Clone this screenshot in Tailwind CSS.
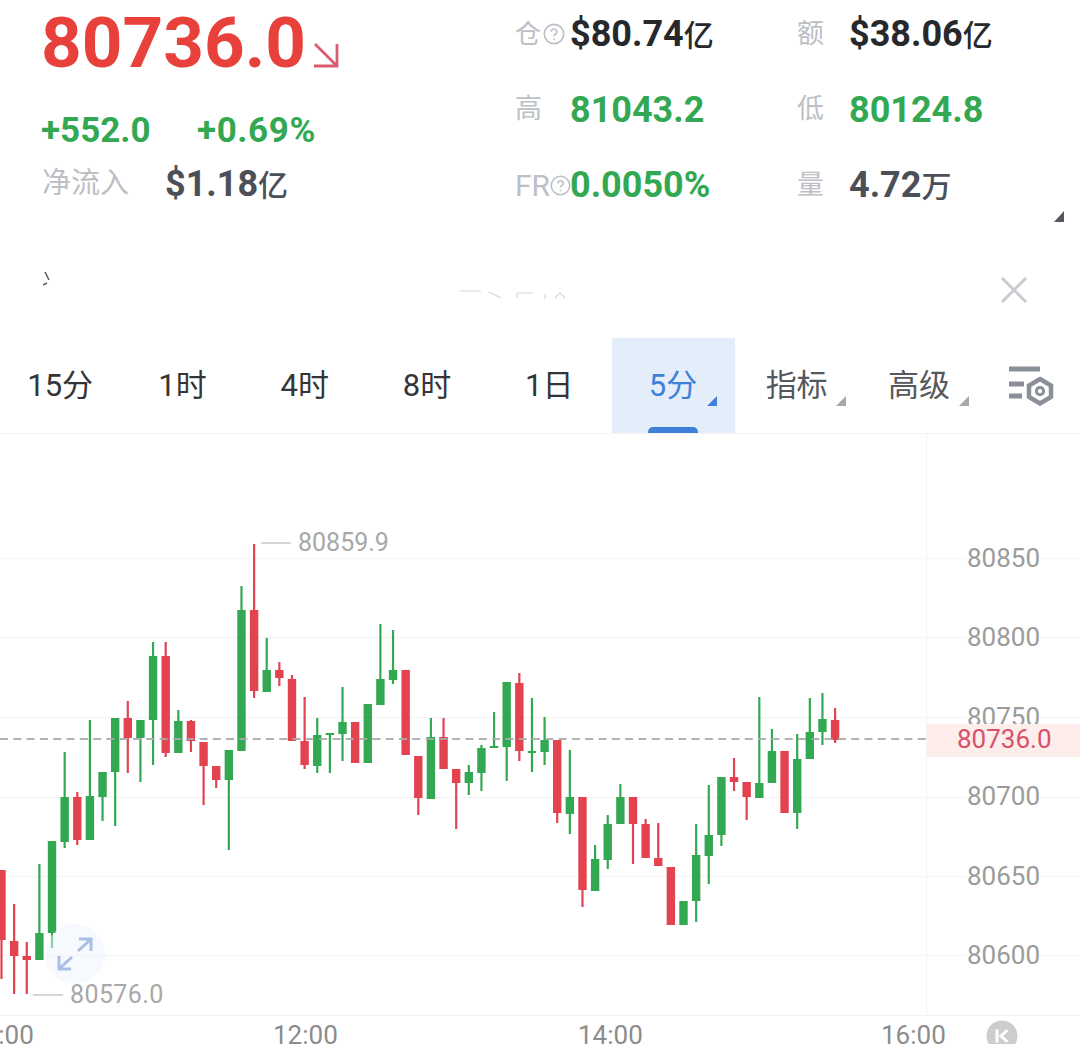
<!DOCTYPE html>
<html lang="zh-CN">
<head>
    <meta charset="UTF-8">
    <title>BTC</title>
    <script src="https://cdn.jsdelivr.net/npm/@tailwindcss/browser@4"></script>
</head>
<body class="bg-white">
    <div class="w-[1080px] h-[1044px] overflow-hidden bg-white font-['Roboto','Noto_Sans_CJK_SC',sans-serif]">

        <!-- Header -->
        <div class="flex h-[248px]">
            <div class="w-[515px] pl-[41px]">
                <div class="flex h-[86px] items-center">
                    <span class="text-[71px] leading-[86px] font-bold text-[#e8403a]">80736.0</span>
                    <svg class="w-[28px] h-[28px] ml-[6px] mt-[24px] text-[#dc5a70]" viewBox="0 0 28 28" fill="none" stroke="currentColor" stroke-width="2.8">
                        <path d="M3 3 L25 25 M25 3 V25 H2"/>
                    </svg>
                </div>
                <div class="flex h-[40px] mt-[25px] items-center text-[35px] font-bold text-[#33a853]">
                    <span class="w-[156px]">+552.0</span>
                    <span class="tracking-[0.6px]">+0.69%</span>
                </div>
                <div class="flex h-[40px] mt-[13px] items-center">
                    <span class="w-[124px] pl-px text-[29px] text-[#bcc0c5]">净流入</span>
                    <span class="text-[36px] font-bold text-[#4b5058]">$1.18<span class="text-[30px] font-medium">亿</span></span>
                </div>
            </div>
            <div class="flex-1 pt-[14px] flex flex-col gap-[35.5px] relative">
                <div class="flex h-[40px] items-center">
                    <div class="flex items-center w-[55px] text-[26px] text-[#bcc0c5]">仓<svg class="w-[22px] h-[22px] ml-[2px] shrink-0" viewBox="0 0 20 20" fill="none" stroke="currentColor" stroke-width="1.5"><circle cx="10" cy="10" r="8.8"/><path d="M7.5 8 a2.5 2.5 0 1 1 3.6 2.2 c-.8.4-1.1.9-1.1 1.8 M10 14 v1.5"/></svg></div>
                    <div class="w-[227px] text-[36px] font-bold text-[#26282c]">$80.74<span class="text-[30px] font-medium">亿</span></div>
                    <div class="w-[52px] text-[27px] text-[#bcc0c5]">额</div>
                    <div class="text-[36px] font-bold text-[#26282c]">$38.06<span class="text-[30px] font-medium">亿</span></div>
                </div>
                <div class="flex h-[40px] items-center">
                    <div class="w-[55px] text-[27px] text-[#bcc0c5]">高</div>
                    <div class="w-[227px] text-[36px] font-bold text-[#33a853]">81043.2</div>
                    <div class="w-[52px] text-[27px] text-[#bcc0c5]">低</div>
                    <div class="text-[36px] font-bold text-[#33a853]">80124.8</div>
                </div>
                <div class="flex h-[40px] items-center">
                    <div class="flex items-center w-[55px] text-[30px] text-[#bcc0c5]">FR<svg class="w-[21px] h-[21px] ml-0 shrink-0" viewBox="0 0 20 20" fill="none" stroke="currentColor" stroke-width="1.5"><circle cx="10" cy="10" r="8.8"/><path d="M7.5 8 a2.5 2.5 0 1 1 3.6 2.2 c-.8.4-1.1.9-1.1 1.8 M10 14 v1.5"/></svg></div>
                    <div class="w-[227px] text-[36px] font-bold text-[#33a853]">0.0050%</div>
                    <div class="w-[52px] text-[27px] text-[#bcc0c5]">量</div>
                    <div class="text-[36px] font-bold text-[#4b5058]">4.72<span class="text-[30px] font-medium">万</span></div>
                </div>
                <!-- expand corner -->
                <svg class="absolute right-[16px] top-[211px] w-[10px] h-[11px] text-[#55595f]" viewBox="0 0 10 11" fill="currentColor"><path d="M10 0 V11 H0 Z"/></svg>
            </div>
        </div>

        <!-- Notice (faded out) -->
        <div class="relative flex h-[90px] items-center justify-between pl-[43px] pr-[52px]">
            <svg class="w-[8px] h-[14px] -mt-[28px] text-[#55595f]" viewBox="0 0 8 14" fill="none" stroke="currentColor" stroke-width="1.5"><path d="M2 0 L6 8 M0 13 L4 11"/></svg>
            <svg class="absolute left-[455px] top-[41px] w-[125px] h-[12px] text-[#d4d6d9]" viewBox="0 0 125 12" fill="none" stroke="currentColor" stroke-width="1.2"><path d="M5 2 H26 M34 3 L46 9 M62 4 H78 M62 4 V9 M90 5 V10 M100 9 L105 4 L110 9"/></svg>
            <svg class="w-[28px] h-[28px] -mt-[6px] text-[#c8cbcf]" viewBox="0 0 28 28" fill="none" stroke="currentColor" stroke-width="3"><path d="M2 2 L26 26 M26 2 L2 26"/></svg>
        </div>

        <!-- Tabs -->
        <div class="flex h-[95px] -ml-px text-[31px] text-[#333538]">
            <div class="w-[122.3px] flex items-center justify-center pt-[1px]">15分</div>
            <div class="w-[122.3px] flex items-center justify-center pt-[1px]">1时</div>
            <div class="w-[122.3px] flex items-center justify-center pt-[1px]">4时</div>
            <div class="w-[122.3px] flex items-center justify-center pt-[1px]">8时</div>
            <div class="w-[122.3px] flex items-center justify-center pt-[1px]">1日</div>
            <div class="w-[123px] ml-[2px] relative flex items-center justify-center pt-[1px] pr-[2px] bg-[#e4eefb] text-[#3f80d8]">
                5分
                <svg class="absolute left-[95px] top-[58px] w-[10px] h-[10px] text-[#3f80d8]" viewBox="0 0 10 10" fill="currentColor"><path d="M10 0 V10 H0 Z"/></svg>
                <div class="absolute left-[36px] bottom-0 w-[50px] h-[6px] rounded-t-[5px] bg-[#3f80d8]"></div>
            </div>
            <div class="w-[122.3px] relative flex items-center justify-center pt-[1px] text-[#55585c]">
                指标
                <svg class="absolute left-[101px] top-[58px] w-[10px] h-[10px] text-[#a8a8a8]" viewBox="0 0 10 10" fill="currentColor"><path d="M10 0 V10 H0 Z"/></svg>
            </div>
            <div class="w-[122.3px] relative flex items-center justify-center pt-[1px] text-[#55585c]">
                高级
                <svg class="absolute left-[101px] top-[58px] w-[10px] h-[10px] text-[#a8a8a8]" viewBox="0 0 10 10" fill="currentColor"><path d="M10 0 V10 H0 Z"/></svg>
            </div>
            <div class="flex-1 flex items-center pl-[28px]">
                <svg class="w-[46px] h-[40px] text-[#8b9098]" viewBox="0 0 46 40" fill="none">
                    <path d="M1 3 H32 M1 18 H16 M1 30 H14" stroke="currentColor" stroke-width="5"/>
                    <path d="M32 13 L43 19.5 V31 L32 37.5 L21 31 V19.5 Z" stroke="currentColor" stroke-width="4.5"/>
                    <circle cx="32" cy="25.2" r="3.6" stroke="currentColor" stroke-width="3"/>
                </svg>
            </div>
        </div>

        <!-- Chart -->
        <div class="relative h-[582px] border-t border-[#f2f2f2] overflow-hidden">
            <svg id="chart" class="absolute left-0 top-0 w-[1080px] h-[582px]" viewBox="0 433 1080 582"></svg>

            <!-- price axis -->
            <div class="absolute left-[926px] top-0 w-[154px] h-full border-l border-[#f2f2f2] text-[26px] text-[#9b9b9b] leading-none">
                <span class="absolute left-[40px] top-[111px] bg-white">80850</span>
                <span class="absolute left-[40px] top-[190px] bg-white">80800</span>
                <span class="absolute left-[40px] top-[270px] bg-white">80750</span>
                <span class="absolute left-[40px] top-[349px] bg-white">80700</span>
                <span class="absolute left-[40px] top-[429px] bg-white">80650</span>
                <span class="absolute left-[40px] top-[508px] bg-white">80600</span>
                <div class="absolute left-0 top-[290px] w-[154px] h-[33px] flex items-center pl-[30px] pb-[3px] bg-[#fdeeec] text-[#d9506a]">80736.0</div>
            </div>

            <!-- high / low marks -->
            <div class="absolute left-[261px] top-[94px] flex items-center gap-[7px] text-[25px] leading-[30px] text-[#a8a8a8]"><span class="w-[30px] h-[2px] bg-[#d6d6d6]"></span>80859.9</div>
            <div class="absolute left-[33px] top-[546px] flex items-center gap-[7px] text-[25px] leading-[30px] tracking-[0.4px] text-[#a8a8a8]"><span class="w-[30px] h-[2px] bg-[#d6d6d6]"></span>80576.0</div>

            <!-- fullscreen button -->
            <div class="absolute left-[45px] top-[490px] w-[60px] h-[60px] rounded-full bg-[#edf3fc]/50 flex items-center justify-center">
                <svg class="w-[36px] h-[34px] text-[#a9bfe6]" viewBox="0 0 36 34" fill="none" stroke="currentColor" stroke-width="3">
                    <path d="M21 14 L33 3 M22 2 H34 V14 M15 20 L3 31 M2 19 V32 H14"/>
                </svg>
            </div>
        </div>

        <!-- Time axis -->
        <div class="relative h-[29px] border-t border-[#f2f2f2] text-[26px] text-[#8c8c8c] leading-[38px]">
            <span class="absolute left-[-31px] top-0">10:00</span>
            <span class="absolute left-[273px] top-0">12:00</span>
            <span class="absolute left-[578px] top-0">14:00</span>
            <span class="absolute left-[881px] top-0">16:00</span>
            <svg class="absolute left-[986px] top-[4px] w-[32px] h-[32px]" viewBox="0 0 32 32">
                <circle cx="16" cy="16" r="15.5" fill="#cdcdcd"/>
                <path d="M11 9.5 V22.5" stroke="#fff" stroke-width="3"/>
                <path d="M21.5 10 L15 16 L21.5 22" stroke="#fff" stroke-width="3" fill="none"/>
            </svg>
        </div>
    </div>

    <script>
        // [color, high, top, bottom, low], one entry per 5 minute bar
        const bars = [
            ['r',869,869,939,978],['r',903,940,955,993],['r',941,955,959,993],['g',863,932,959,959],
            ['g',840,840,932,947],['g',751,796,841,847],['r',791,796,839,844],['g',719,795,839,839],
            ['g',771,771,796,820],['g',717,717,771,825],['r',700,717,737,772],['g',719,719,737,781],
            ['g',641,655,719,764],['r',641,655,752,756],['g',709,720,752,752],['r',719,720,740,751],
            ['r',741,741,765,804],['r',765,765,779,787],['g',749,749,779,849],['g',585,609,750,750],
            ['r',543,609,690,697],['g',637,669,691,691],['r',661,669,677,685],['r',674,678,740,740],
            ['r',696,740,764,768],['g',717,734,765,772],['g',732,732,734,772],['g',686,721,733,760],
            ['r',721,721,762,762],['g',703,703,762,762],['g',623,678,704,704],['g',629,669,679,683],
            ['r',669,669,754,754],['r',755,755,797,814],['g',717,736,798,798],['r',717,736,768,768],
            ['r',768,768,782,828],['g',764,771,782,794],['g',744,747,772,790],['g',711,745,747,747],
            ['g',681,681,746,780],['r',672,682,750,760],['g',697,750,751,771],['g',716,739,751,764],
            ['r',739,739,812,822],['g',749,796,813,833],['r',796,796,889,906],['g',844,858,890,890],
            ['g',814,823,859,868],['g',783,796,823,823],['r',796,796,823,863],['r',818,823,857,857],
            ['r',822,857,865,865],['r',866,866,924,924],['g',900,900,924,924],['g',823,854,900,921],
            ['g',784,834,855,883],['g',776,776,834,845],['r',757,776,781,790],['r',781,781,796,819],
            ['g',696,782,797,797],['g',728,750,782,782],['r',750,750,812,812],['g',733,758,812,828],
            ['g',697,731,758,758],['g',692,718,731,744],['r',707,719,739,742]
        ];
        const colors = { g: '#33a853', r: '#e2434f' };
        const svgNS = 'http://www.w3.org/2000/svg';
        const chart = document.getElementById('chart');

        function addEl(tag, attrs) {
            const el = document.createElementNS(svgNS, tag);
            for (const k in attrs) el.setAttribute(k, attrs[k]);
            chart.appendChild(el);
        }

        // Grid lines
        [557, 636, 716, 796, 875, 954].forEach(y => {
            addEl('line', { x1: 0, x2: 1080, y1: y + 0.5, y2: y + 0.5, stroke: '#f5f5f5', 'stroke-width': 1.5 });
        });

        // Candles
        bars.forEach((b, i) => {
            const x = 1.5 + i * 12.63;
            const c = colors[b[0]];
            addEl('line', { x1: x, x2: x, y1: b[1], y2: b[4], stroke: c, 'stroke-width': 2.2 });
            addEl('rect', { x: x - 4.2, y: b[2], width: 8.4, height: Math.max(b[3] - b[2], 2), fill: c });
        });

        // Last price line
        addEl('line', { x1: 0, x2: 926, y1: 738, y2: 738, stroke: '#aaaaaa', 'stroke-width': 2, 'stroke-dasharray': '8 5.3', 'stroke-opacity': 0.9 });
    </script>
</body>
</html>
